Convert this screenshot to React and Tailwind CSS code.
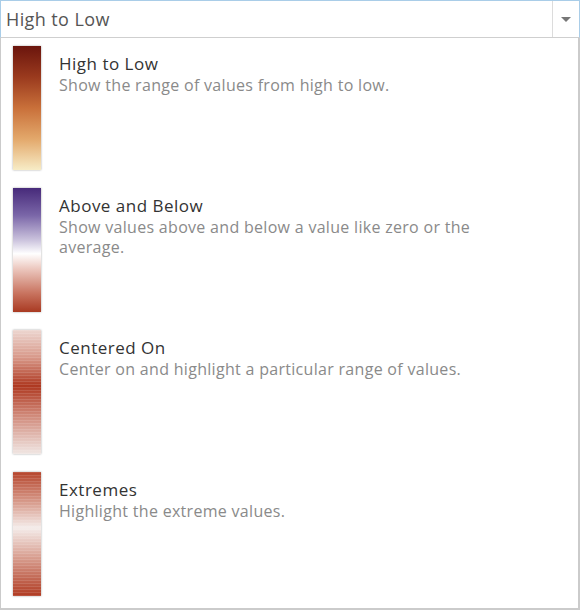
import React from 'react'

const items = [
  {
    title: 'High to Low',
    desc: 'Show the range of values from high to low.',
    swatch: 'bg-[linear-gradient(to_bottom,#6b150d_0%,#9a3a1e_25%,#c9703a_50%,#e3a86b_75%,#f7ecc6_100%)]',
    stripes: false,
  },
  {
    title: 'Above and Below',
    desc: 'Show values above and below a value like zero or the average.',
    swatch: 'bg-[linear-gradient(to_bottom,#472a7a_0%,#7a66a8_22%,#cbc3dd_42%,#ffffff_53%,#ecc8bf_65%,#c8735f_85%,#a93a22_100%)]',
    stripes: false,
  },
  {
    title: 'Centered On',
    desc: 'Center on and highlight a particular range of values.',
    swatch: 'bg-[linear-gradient(to_bottom,#ecd6d0_0%,#d8998a_22%,#ae3820_45%,#cf8676_68%,#f0e6e3_100%)]',
    stripes: true,
  },
  {
    title: 'Extremes',
    desc: 'Highlight the extreme values.',
    swatch: 'bg-[linear-gradient(to_bottom,#b5452c_0%,#d89d8e_25%,#f4ecea_45%,#d9a193_68%,#b03b22_100%)]',
    stripes: true,
  },
]

function Swatch({ cls, stripes }) {
  return (
    <div className={`relative w-[28px] h-[124px] shrink-0 shadow-[0_0_2px_rgba(0,0,0,0.35)] ${cls}`}>
      {stripes && (
        <div className="absolute inset-0 bg-[repeating-linear-gradient(to_bottom,rgba(255,255,255,0.12)_0px,rgba(255,255,255,0.12)_1px,transparent_1px,transparent_3px)]" />
      )}
    </div>
  )
}

export default function App() {
  return (
    <div className="w-[580px] h-[610px] bg-white font-['Open_Sans','Liberation_Sans',sans-serif]">
      {/* select box */}
      <div className="flex h-[38px] border border-[#a9cde8] border-b-[#cfcfcf]">
        <div className="flex-1 flex items-center pl-[5px] text-[18px] tracking-[0.4px] text-[#555]">High to Low</div>
        <div className="w-[27px] flex items-center justify-center border-l border-[#dcdcdc]">
          <div className="w-0 h-0 border-l-[5px] border-r-[5px] border-t-[5px] border-l-transparent border-r-transparent border-t-[#777]" />
        </div>
      </div>

      {/* list */}
      <div className="h-[572px] border-l border-r-2 border-b-2 border-[#cbcbcb] pt-[8px]">
        {items.map((it) => (
          <div key={it.title} className="flex h-[142px] pl-[12px] gap-[18px]">
            <Swatch cls={it.swatch} stripes={it.stripes} />
            <div className="pt-[7px] w-[445px]">
              <p className="text-[17px] leading-[22px] tracking-[0.5px] text-[#333]">{it.title}</p>
              <p className="text-[16px] leading-[20px] tracking-[0.3px] text-[#8a8a8a]">{it.desc}</p>
            </div>
          </div>
        ))}
      </div>
    </div>
  )
}
